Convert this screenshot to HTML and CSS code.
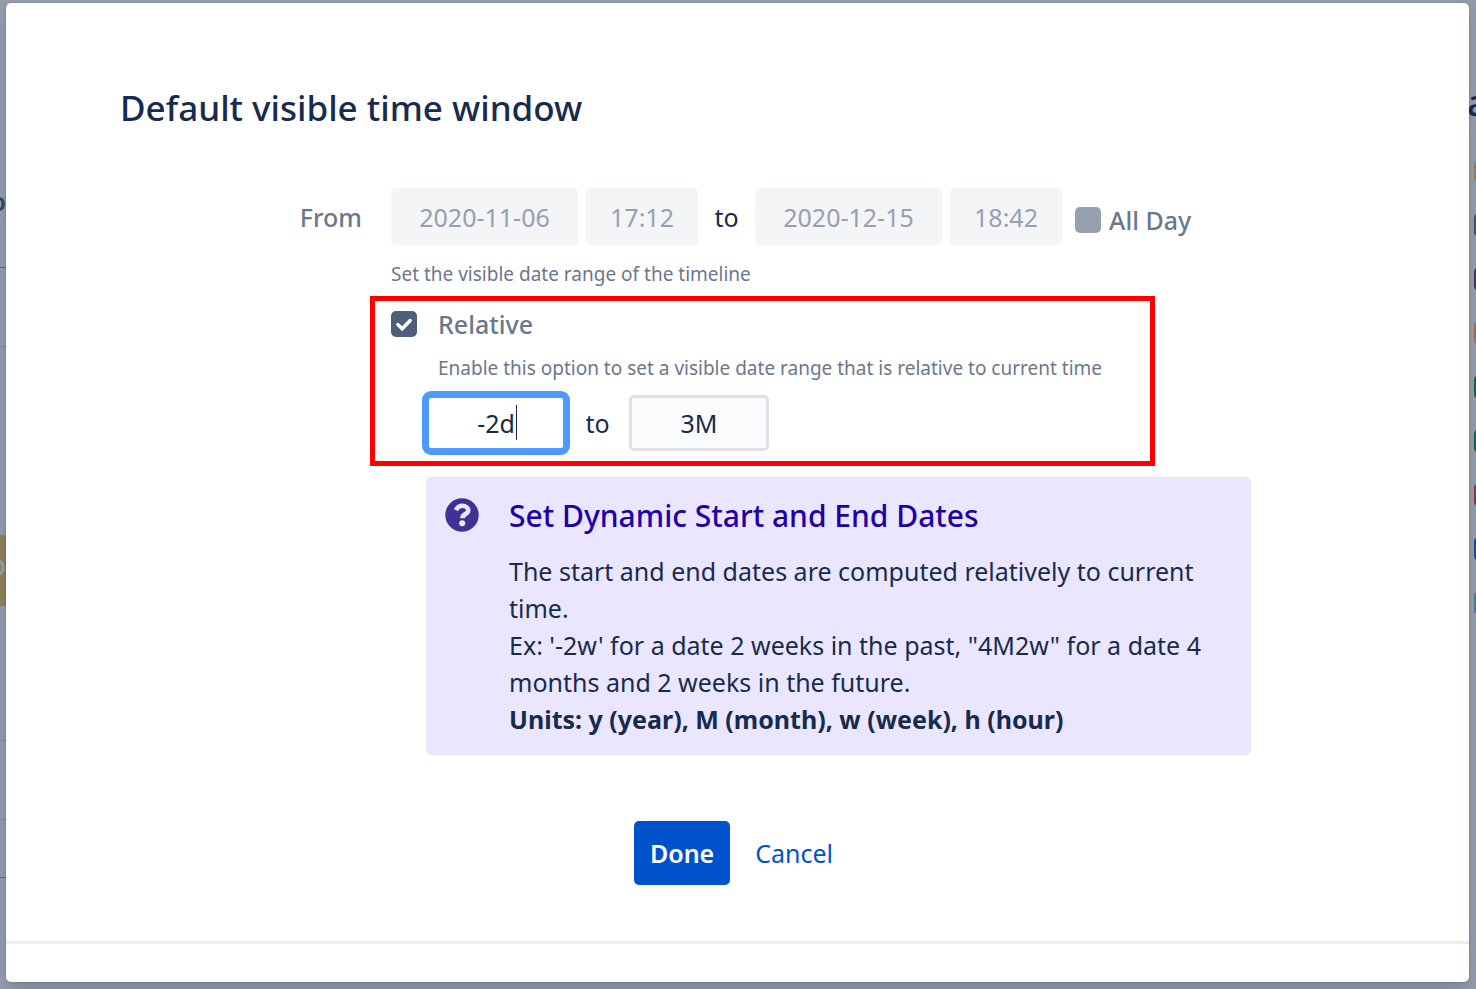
FILE: index.html
```html
<!DOCTYPE html>
<html lang="en">
<head>
<meta charset="utf-8">
<title>Default visible time window</title>
<link rel="stylesheet" href="styles.css">
</head>
<body>
<div class="page">
  <div class="backdrop" aria-hidden="true">
    <div class="rail rail-left">
      <div class="row row-name">o</div>
      <div class="row row-short"></div>
      <div class="row row-plain"></div>
      <div class="row row-event">o</div>
      <div class="row row-after"></div>
      <div class="row row-short"></div>
      <div class="row row-last"></div>
    </div>
    <div class="rail rail-right">
      <div class="legend-title">a</div>
      <div class="swatch gold"></div>
      <div class="swatch slate"></div>
      <div class="swatch purple"></div>
      <div class="swatch orange"></div>
      <div class="swatch green"></div>
      <div class="swatch green"></div>
      <div class="swatch red"></div>
      <div class="swatch blue"></div>
      <div class="swatch teal"></div>
    </div>
  </div>

  <main class="dialog" role="dialog" aria-labelledby="dialog-title">
    <form class="content">
      <h1 class="title" id="dialog-title">Default visible time window</h1>
      <div class="form">
        <label class="label from" for="from-date">From</label>
        <div class="fields">
          <div class="range">
            <input class="input date" id="from-date" type="text" value="2020-11-06" disabled>
            <input class="input time" type="text" value="17:12" aria-label="From time" disabled>
            <span class="to">to</span>
            <input class="input date" type="text" value="2020-12-15" aria-label="To date" disabled>
            <input class="input time" type="text" value="18:42" aria-label="To time" disabled>
            <span class="all-day">
              <input class="check" id="all-day" type="checkbox" disabled>
              <label class="label" for="all-day">All Day</label>
            </span>
          </div>
          <p class="hint">Set the visible date range of the timeline</p>

          <div class="relative-box">
            <div class="relative-head">
              <span class="check-wrap">
                <input class="check" id="relative" type="checkbox" checked>
                <svg class="tick" viewBox="0 0 26 26" aria-hidden="true"><path d="M6.800 13.600l4.400 4.200 8-8.300" fill="none" stroke="#fff" stroke-width="3.400" stroke-linecap="round" stroke-linejoin="miter"/></svg>
              </span>
              <label class="label" for="relative">Relative</label>
            </div>
            <p class="hint relative-hint">Enable this option to set a visible date range that is relative to current time</p>
            <div class="range relative-range">
              <span class="focused">
                <input class="input offset active" type="text" value="-2d" aria-label="Relative start">
                <span class="caret"></span>
              </span>
              <span class="to">to</span>
              <input class="input offset" type="text" value="3M" aria-label="Relative end">
            </div>
          </div>

          <section class="panel">
            <svg class="panel-icon" viewBox="0 0 34 34" aria-hidden="true">
              <circle cx="17" cy="17" r="16.700" fill="#403294"/>
              <path d="M11 12.200C12.400 9 14.500 7.800 17.400 7.800C20.800 7.800 23.200 9.900 23.200 12.400C23.200 16.200 17.400 15.800 17.400 20.200" fill="none" stroke="#eae6ff" stroke-width="4.600"/>
              <circle cx="17.200" cy="25.300" r="3" fill="#eae6ff"/>
            </svg>
            <div class="panel-body">
              <h2 class="panel-title">Set Dynamic Start and End Dates</h2>
              <p class="panel-text">The start and end dates are computed relatively to current time.<br>Ex: '-2w' for a date 2 weeks in the past, "4M2w" for a date 4 months and 2 weeks in the future.<br><strong>Units: y (year), M (month), w (week), h (hour)</strong></p>
            </div>
          </section>
        </div>
      </div>
      <div class="actions">
        <button class="done" type="button">Done</button>
        <a class="cancel" href="#">Cancel</a>
      </div>
    </form>
    <footer class="footer"></footer>
  </main>
</div>
</body>
</html>
```
FILE: styles.css
```css
* {
  box-sizing: border-box;
}

body {
  margin: 0;
  background: #939cac;
  color: #172b4d;
  font: 25px/36px "Segoe UI", "Noto Sans", "Open Sans", sans-serif;
}

h1, h2, p {
  margin: 0;
}

.page {
  position: relative;
  display: flex;
  min-height: 100vh;
  padding: 3px 7px 7px 6px;
  overflow: hidden;
}

/* Timeline page dimmed behind the dialog */
.backdrop {
  position: absolute;
  inset: 0;
  display: flex;
  justify-content: space-between;
}

.rail {
  display: flex;
  flex-direction: column;
  overflow: hidden;
}

.rail-left {
  width: 6px;
}

.row {
  display: flex;
  flex: none;
  align-items: center;
  justify-content: flex-end;
  border-bottom: 1px solid #7f8a9c;
}

.row-name {
  height: 268px;
  padding-top: 134px;
  border-color: #5e6c84;
  color: #344563;
  font-weight: 600;
}

.row-short {
  height: 79px;
}

.row-plain {
  height: 188px;
  border: 0;
}

.row-event {
  height: 71px;
  padding-bottom: 12px;
  border: 0;
  background: #8f815a;
  color: #97a0af;
  font-size: 30px;
}

.row-after {
  height: 135px;
}

.row-last {
  height: 58px;
  border-color: #5e6c84;
}

.rail-right {
  width: 9px;
  gap: 30px;
  padding-top: 85px;
}

.legend-title {
  height: 44px;
  font-size: 36px;
  font-weight: 500;
}

.swatch {
  flex: none;
  width: 24px;
  height: 24px;
  margin-left: 7px;
  border-radius: 5px;
}

.gold { background: #958044; }
.slate { background: #465164; }
.purple { background: #413263; }
.orange { background: #a06f4e; }
.green { background: #126143; }
.red { background: #8b3644; }
.blue { background: #1d4c87; }
.teal { background: #477b91; }

.dialog {
  position: relative;
  display: flex;
  flex: 1;
  flex-direction: column;
  border-radius: 5px;
  background: #fff;
  box-shadow: 0 0 2px rgba(9, 30, 66, 0.24), 0 8px 16px -4px rgba(9, 30, 66, 0.25);
}

.content {
  flex: 1;
  padding: 81px 114px 54px;
}

.title {
  font-size: 35px;
  font-weight: 500;
  line-height: 48px;
}

.form {
  display: grid;
  grid-template-columns: 242px 1fr;
  gap: 29px;
  margin-top: 56px;
}

.label {
  color: #6b778c;
  font-weight: 500;
}

.from {
  padding-top: 11px;
  text-align: right;
}

.range {
  display: flex;
  align-items: center;
}

.input {
  width: 140px;
  height: 56px;
  padding: 0;
  border: 3px solid #dfe1e6;
  border-radius: 5px;
  outline: 0;
  background: #fafbfc;
  color: #172b4d;
  font: inherit;
  text-align: center;
}

.input:disabled {
  height: 57px;
  padding-top: 1px;
  border-color: #f4f5f7;
  background: #f4f5f7;
  color: #97a0af;
}

.date {
  width: 187px;
  margin-right: 8px;
}

.time {
  width: 112px;
}

.to {
  width: 57px;
  text-align: center;
}

.all-day {
  display: flex;
  align-items: center;
  gap: 8px;
  margin-left: 13px;
  padding-top: 6px;
  white-space: nowrap;
}

.check {
  flex: none;
  width: 26px;
  height: 26px;
  margin: 0;
  border-radius: 5px;
  appearance: none;
  background: #505f79;
}

.check:disabled {
  background: #97a0af;
}

.hint {
  color: #6b778c;
  font-size: 19px;
  line-height: 28px;
}

.range + .hint {
  margin-top: 15px;
}

.relative-box {
  width: 785px;
  margin: 8px 0 0 -21px;
  padding: 5px 16px 10px;
  border: 5px solid #f00;
}

.relative-head {
  display: flex;
  align-items: center;
  gap: 21px;
}

.check-wrap {
  position: relative;
  display: flex;
}

.tick {
  position: absolute;
  inset: 0;
  pointer-events: none;
}

.relative-hint {
  margin: 12px 0 13px 47px;
  white-space: nowrap;
}

.relative-range {
  margin-left: 35px;
}

.relative-range .to {
  width: 63px;
}

.focused {
  position: relative;
  display: flex;
}

.active {
  border-color: #4c9aff;
  background: #fff;
  box-shadow: 0 0 0 4px #4c9aff;
}

.caret {
  position: absolute;
  top: 10px;
  left: 90px;
  width: 1px;
  height: 35px;
  background: #172b4d;
}

.panel {
  display: flex;
  gap: 30px;
  max-width: 825px;
  margin: 11px 0 0 35px;
  padding: 20px 19px 17px;
  border-radius: 5px;
  background: #eae6ff;
}

.panel-icon {
  flex: none;
  width: 34px;
  height: 34px;
  margin-top: 1px;
}

.panel-title {
  color: #1f00a6;
  font-size: 30px;
  font-weight: 500;
  line-height: 38px;
}

.panel-text {
  margin-top: 18px;
  line-height: 37px;
}

.actions {
  display: flex;
  align-items: center;
  justify-content: center;
  gap: 8px;
  margin-top: 66px;
}

.done {
  height: 64px;
  padding: 0 16px;
  border: 0;
  border-radius: 5px;
  background: #0052cc;
  color: #fff;
  font: inherit;
  font-weight: 600;
}

.cancel {
  padding: 0 8px 0 17px;
  color: #0052cc;
  text-decoration: none;
}

.footer {
  height: 41px;
  border-top: 3px solid #ebecf0;
}
```
